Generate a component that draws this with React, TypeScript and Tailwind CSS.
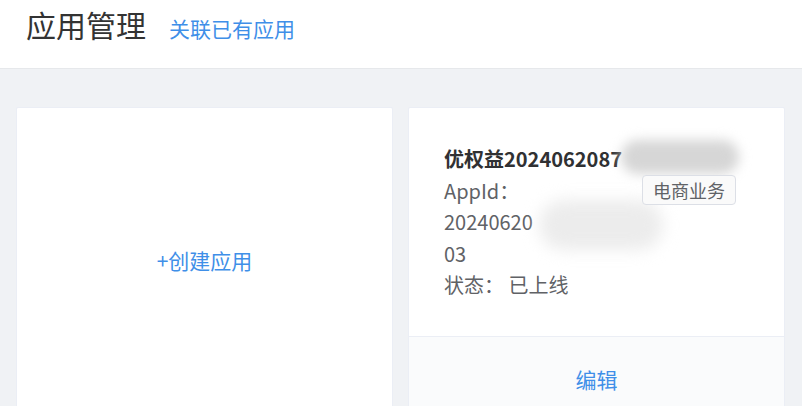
import type { JSX } from 'react';

const font = { fontFamily: '"Noto Sans CJK SC", "Noto Sans", sans-serif' };

function CreateCard(): JSX.Element {
    return (
        <div className="flex h-[306px] w-[377px] shrink-0 items-center justify-center rounded-[2px] border border-[#ebeef5] bg-white">
            <button className="text-[21px] leading-none text-[#3f8fe8]">+创建应用</button>
        </div>
    );
}

function AppCard(): JSX.Element {
    return (
        <div className="flex w-[377px] shrink-0 flex-col rounded-[2px] border border-[#ebeef5] bg-white">
            <div className="relative h-[228px] px-[35px] pt-[35px] text-[20px] leading-[31.5px] text-[#606266]">
                <div className="font-bold text-[#303133]">优权益2024062087</div>
                <div>AppId：</div>
                <div>20240620</div>
                <div>03</div>
                <div>状态： 已上线</div>
                {/* blurred, redacted parts */}
                <span className="absolute left-[212px] top-[32px] h-[34px] w-[118px] rounded-full bg-[#d6d6d6] blur-[6px]" />
                <span className="absolute left-[130px] top-[92px] h-[50px] w-[124px] rounded-full bg-[#ececec] blur-[8px]" />
                <span className="absolute left-[233px] top-[67px] rounded-[4px] border border-[#dcdfe6] bg-[#fafafa] px-[10px] text-[18px] leading-[28px] text-[#606266]">
                    电商业务
                </span>
            </div>
            <div className="flex h-[86px] items-center justify-center border-t border-[#ebeef5] bg-[#fafbfc]">
                <button className="text-[21px] text-[#3f8fe8]">编辑</button>
            </div>
        </div>
    );
}

export default function App(): JSX.Element {
    return (
        <div className="h-[406px] w-[802px] overflow-hidden bg-[#f0f2f5]" style={font}>
            <div className="flex h-[69px] items-start border-b border-[#e6e8eb] bg-white px-[26px] pt-[4px]">
                <h1 className="text-[30px] leading-[40px] text-[#333]">应用管理</h1>
                <a className="ml-[23px] mt-[4px] text-[21px] leading-[40px] text-[#3f8fe8]">关联已有应用</a>
            </div>
            <div className="flex items-start gap-[15px] px-[16px] pt-[38px]">
                <CreateCard />
                <AppCard />
            </div>
        </div>
    );
}
